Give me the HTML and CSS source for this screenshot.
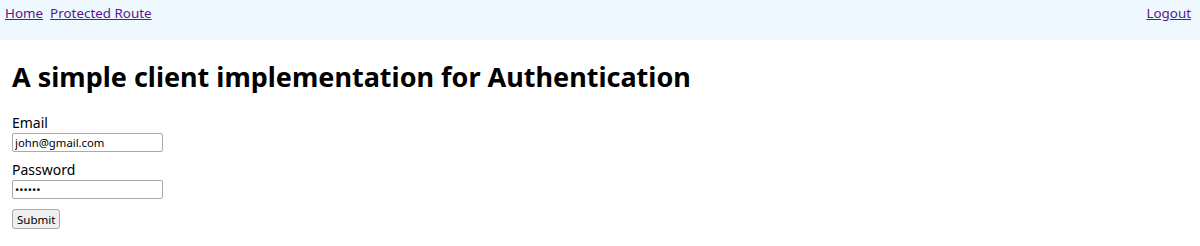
FILE: index.html
```html
<!DOCTYPE html>
<html>
<head>
<meta charset="utf-8">
<link rel="stylesheet" href="styles.css">
</head>
<body>
<nav class="nav">
  <div class="nav-left">
    <a href="#">Home</a>
    <a href="#">Protected Route</a>
  </div>
  <a href="#">Logout</a>
</nav>
<main class="main">
  <h1 class="title">A simple client implementation for Authentication</h1>
  <form class="form">
    <label class="field">
      <span>Email</span>
      <input type="text" value="john@gmail.com">
    </label>
    <label class="field">
      <span>Password</span>
      <input type="password" value="123456">
    </label>
    <button type="button" class="btn">Submit</button>
  </form>
</main>
</body>
</html>
```

FILE: styles.css
```css
html, body {
  margin: 0;
  padding: 0;
  background: #fff;
  font-family: "Noto Sans", sans-serif;
  font-size: 14px;
  color: #000;
}
.nav {
  display: flex;
  justify-content: space-between;
  align-items: flex-start;
  height: 40px;
  box-sizing: border-box;
  padding: 4px 9px 4px 5px;
  background: #f0f8ff;
  font-size: 13.4px;
}
.nav-left {
  display: flex;
  gap: 7px;
}
.nav a {
  color: #551a8b;
  text-decoration: underline;
}
.main {
  padding: 0 12px;
}
.title {
  margin: 18px 0 18px;
  font-size: 27px;
  font-weight: 700;
}
.form {
  display: flex;
  flex-direction: column;
  align-items: flex-start;
}
.field {
  display: flex;
  flex-direction: column;
  gap: 1px;
  margin-bottom: 8px;
}
.field span {
  line-height: 18px;
  margin-top: 1px;
}
.field input {
  width: 151px;
  box-sizing: border-box;
  font-family: "Noto Sans", sans-serif;
  font-size: 11.3px;
  height: 19px;
  padding: 1px 2px;
  border: 1px solid #aaa;
  border-radius: 2px;
}
.btn {
  margin-top: 2px;
  font-family: "Noto Sans", sans-serif;
  font-size: 11.5px;
  height: 20px;
  padding: 0 4px;
  border: 1px solid #aaa;
  border-radius: 3px;
  background: #efefef;
}
```
